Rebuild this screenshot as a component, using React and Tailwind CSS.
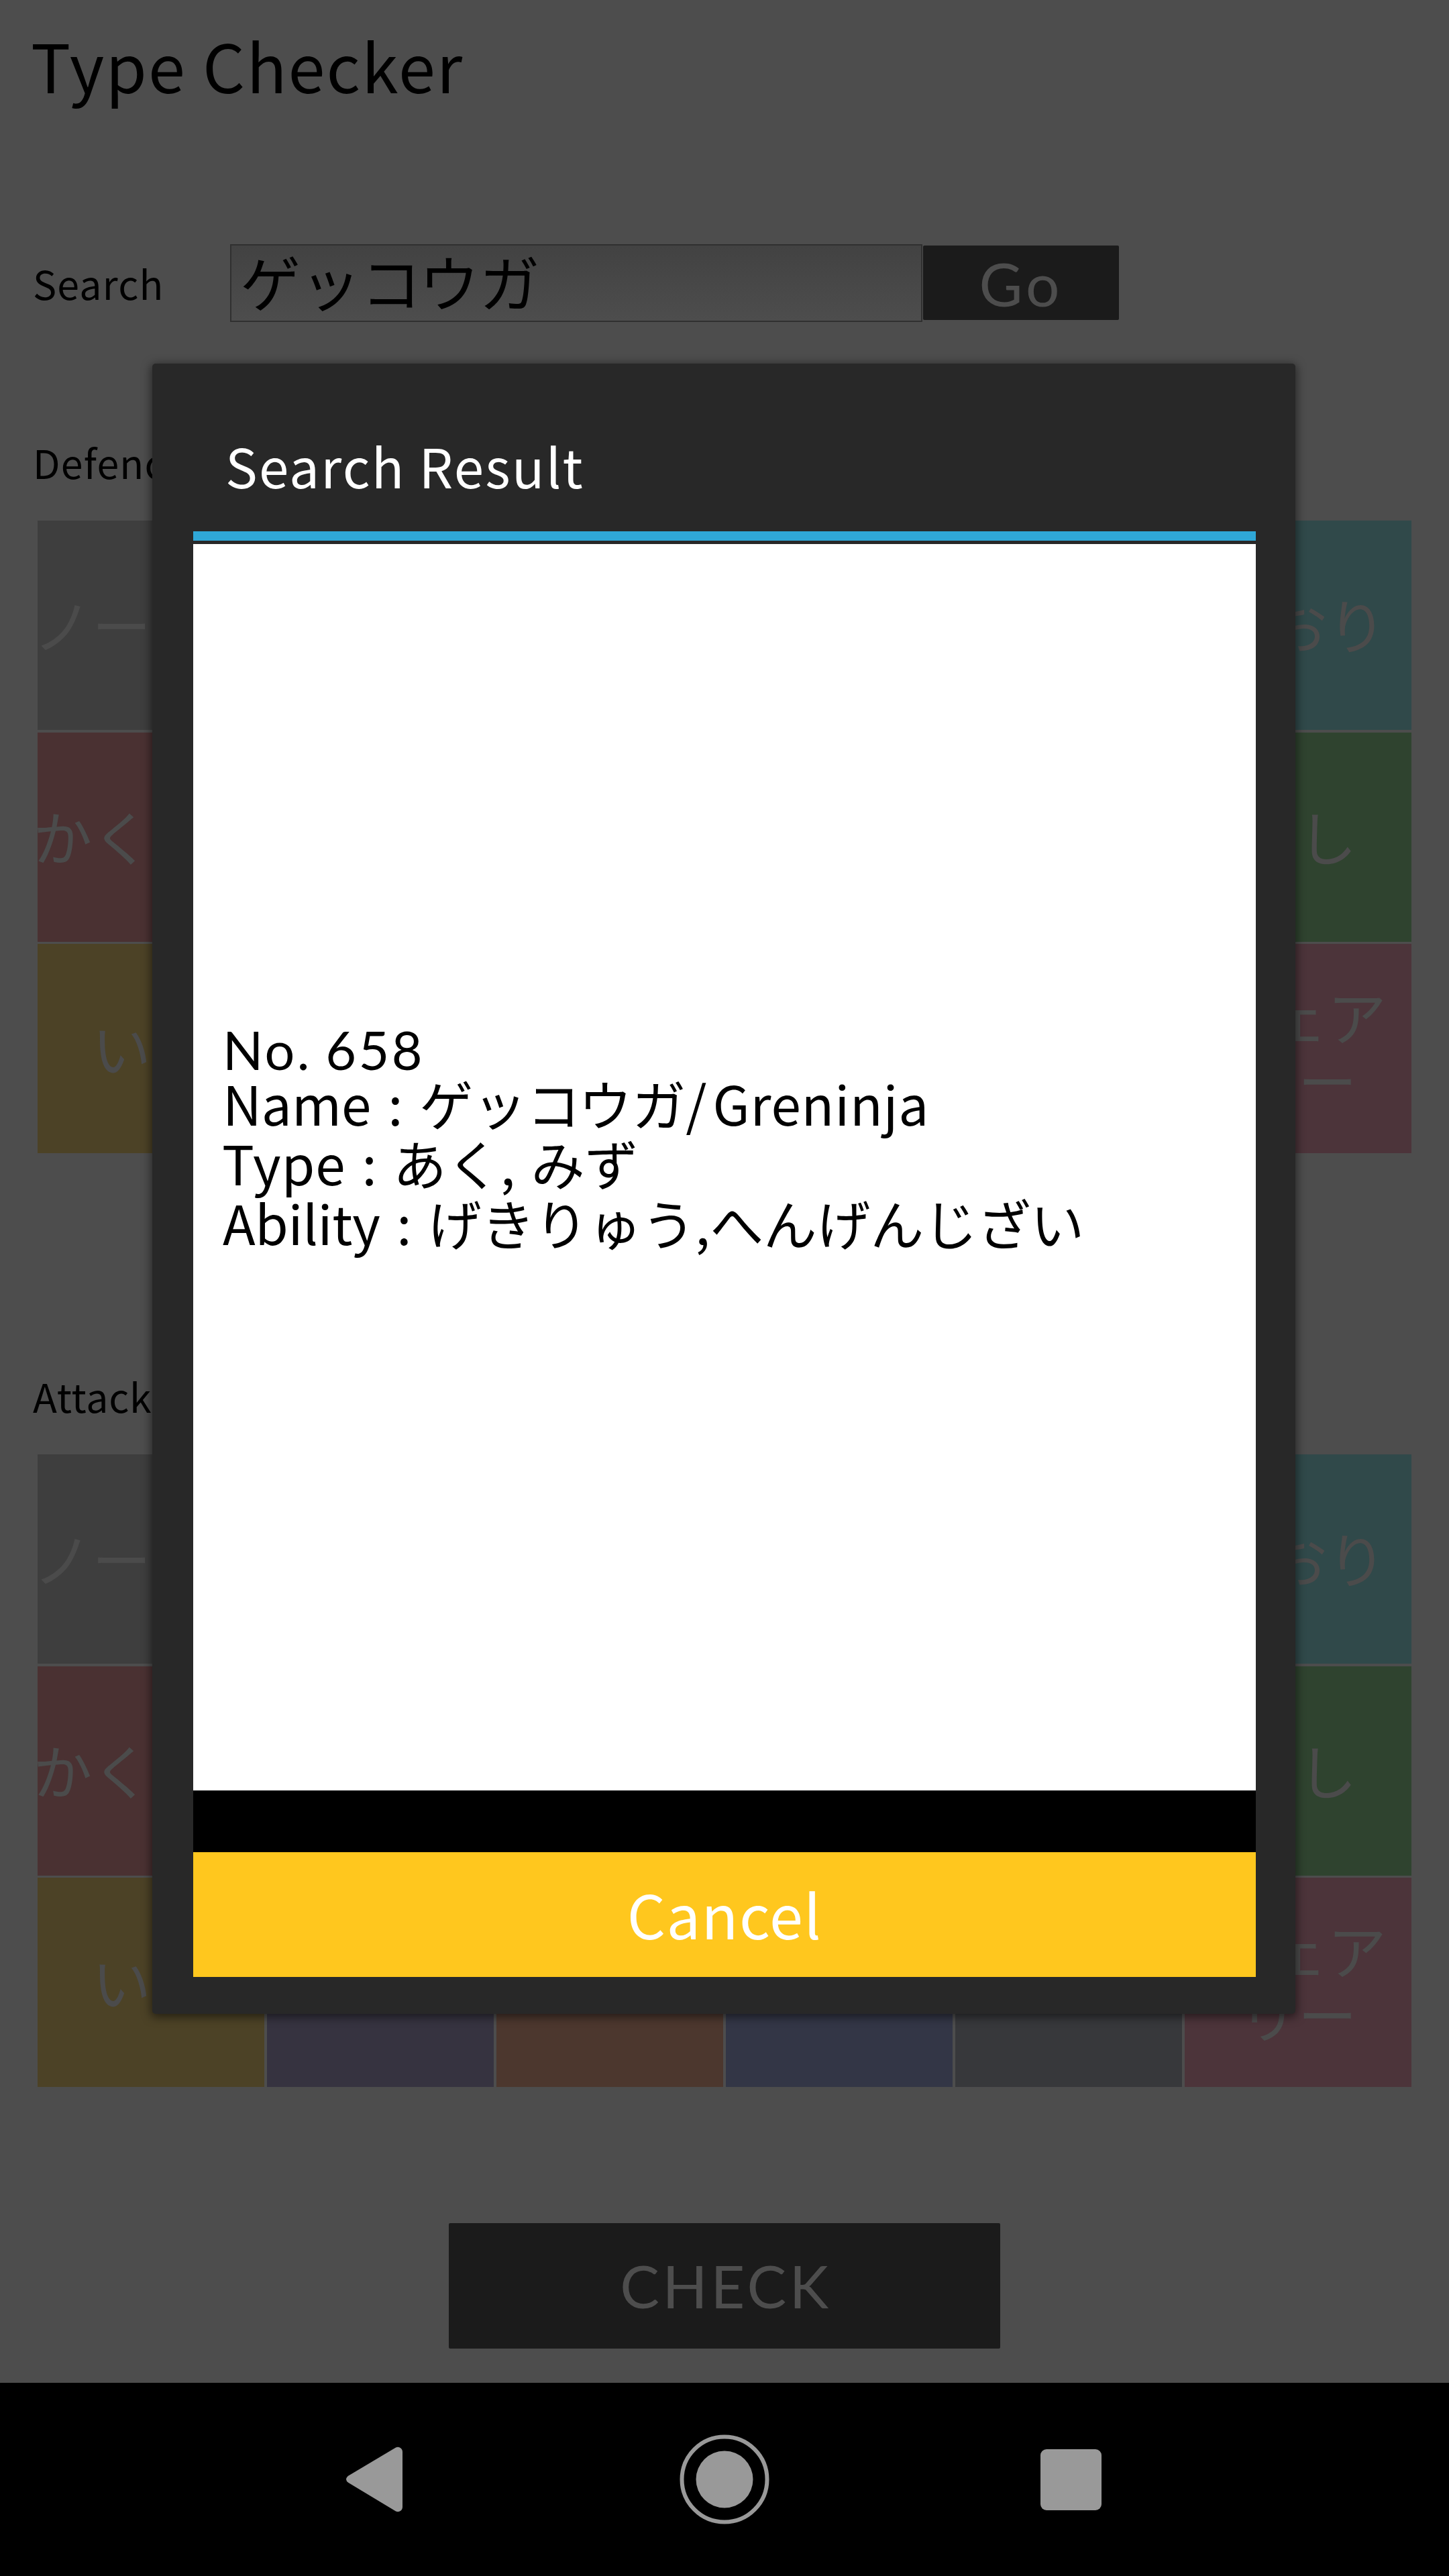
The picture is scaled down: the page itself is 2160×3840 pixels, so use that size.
import React from "react";

const TYPES = [
  { name: "ノーマル", color: "bg-[#3e3e3e]" },
  { name: "ほのお", color: "bg-[#4b3029]" },
  { name: "みず", color: "bg-[#2d3c4c]" },
  { name: "でんき", color: "bg-[#4c4725]" },
  { name: "くさ", color: "bg-[#31462c]" },
  { name: "こおり", color: "bg-[#30494a]" },
  { name: "かくとう", color: "bg-[#4a3132]" },
  { name: "どく", color: "bg-[#41304a]" },
  { name: "じめん", color: "bg-[#473d2c]" },
  { name: "ひこう", color: "bg-[#37424c]" },
  { name: "エスパー", color: "bg-[#4c3040]" },
  { name: "むし", color: "bg-[#2f432f]" },
  { name: "いわ", color: "bg-[#4c4226]" },
  { name: "ゴースト", color: "bg-[#363340]" },
  { name: "ドラゴン", color: "bg-[#4c372e]" },
  { name: "あく", color: "bg-[#333646]" },
  { name: "はがね", color: "bg-[#37383b]" },
  { name: "フェア\nリー", color: "bg-[#4c343a]" },
];

function TypeGrid() {
  return (
    <div className="mx-[56px] grid h-[943px] grid-cols-6 grid-rows-3 gap-[3.5px]">
      {TYPES.map((type) => (
        <div
          key={type.name}
          className={`flex items-center justify-center overflow-hidden pb-[7px] text-center text-[88px] leading-[95px] whitespace-pre text-[#4b4b4b] ${type.color}`}
        >
          {type.name}
        </div>
      ))}
    </div>
  );
}

function ResultDialog() {
  return (
    <div className="absolute top-[542px] left-[227px] flex h-[2460px] w-[1704px] flex-col rounded-[5px] bg-[#282828] pr-[59px] pl-[61px] shadow-[0_3px_14px_2px_rgba(0,0,0,0.5)]">
      <h2 className="h-[250px] pt-[101px] pl-[48px] text-[80px] leading-[100px] tracking-[2.2px] text-white">
        Search Result
      </h2>
      <div className="h-[14px] bg-[#2fa7d7]" />
      <div className="mt-[5px] h-[1858px] bg-white pt-[711px] pl-[44px] text-[80px] whitespace-pre text-black [word-spacing:7px]">
        <p className="-mb-[8px] font-[Lato] text-[79px] leading-[86px] tracking-[3.4px] [word-spacing:-3px]">
          No. 658
        </p>
        <p className="leading-[86px]">
          Name : ゲッコウガ<span className="tracking-[9px]">/</span>
          <span className="tracking-[0.8px]">Greninja</span>
        </p>
        <p className="-ml-[1px] leading-[92px] [word-spacing:6px]">
          <span className="tracking-[1px]">Type</span> : あく, みず
        </p>
        <p className="leading-[86px] tracking-[-0.3px]">Ability : げきりゅう,へんげんじざい</p>
      </div>
      <div className="h-[92px] bg-black" />
      <button className="h-[186px] bg-[#ffc71e] pb-[4px] text-center text-[90px] leading-[178px] tracking-[1.4px] text-white">
        Cancel
      </button>
    </div>
  );
}

function NavigationBar() {
  return (
    <nav className="flex h-[288px] items-center bg-black pl-[516px]">
      <svg width="84" height="98" viewBox="0 0 84 98" fill="#999999">
        <path d="M74 1.5Q77 0 80 1.5Q84 3.5 84 8V90Q84 94.500 80 96.500Q77 98 74 96.500L3.500 54Q0 51.500 0 49Q0 46 3.500 43.500Z" />
      </svg>
      <svg className="ml-[413px]" width="134" height="134" viewBox="0 0 134 134">
        <circle cx="67" cy="67" r="63.500" fill="none" stroke="#999999" strokeWidth="6" />
        <circle cx="67" cy="67" r="42.500" fill="#999999" />
      </svg>
      <div className="ml-[404px] h-[91px] w-[91px] rounded-[9px] bg-[#999999]" />
    </nav>
  );
}

export default function App() {
  return (
    <div className="relative h-[3840px] w-[2160px] overflow-hidden bg-[#4d4d4d] font-['Noto_Sans_CJK_JP','Noto_Sans',sans-serif] text-black">
      <main className="flex h-[3552px] flex-col pt-[46px]">
        <h1 className="h-[100px] pl-[46px] text-[99px] leading-[100px] tracking-[2.1px]">Type Checker</h1>

        <div className="mt-[218px] flex h-[116px] items-start">
          <label className="w-[343px] pl-[49px] text-[59px] leading-[115px] tracking-[1.2px]">Search</label>
          <div className="h-[116px] w-[1032px] border-2 border-[#303030] bg-linear-to-b from-[#424242] to-[#4d4d4d] pl-[13px] text-[90px] leading-[104px]">
            ゲッコウガ
          </div>
          <button className="mt-[2px] ml-[1px] h-[111px] w-[292px] rounded-[2px] bg-[#1b1b1b] pt-[3px] text-center font-[Lato] text-[89px] leading-[108px] tracking-[5px] text-[#4d4d4d]">
            Go
          </button>
        </div>

        <h3 className="mt-[179px] h-[60px] pl-[49px] text-[59px] leading-[60px] tracking-[1.2px]">Defence</h3>
        <div className="mt-[57px]">
          <TypeGrid />
        </div>

        <h3 className="mt-[332px] h-[60px] pl-[49px] text-[59px] leading-[60px] tracking-[0.8px]">Attack</h3>
        <div className="mt-[57px]">
          <TypeGrid />
        </div>

        <button className="mt-[203px] h-[187px] w-[822px] self-center rounded-[2px] bg-[#1b1b1b] pl-[4px] text-center font-[Lato] text-[88px] leading-[187px] tracking-[4.6px] text-[#4d4d4d]">
          CHECK
        </button>
      </main>
      <NavigationBar />
      <ResultDialog />
    </div>
  );
}
